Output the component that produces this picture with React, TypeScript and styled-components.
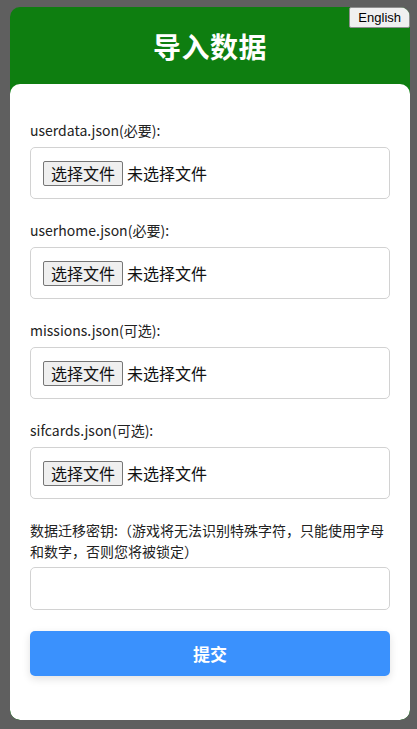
import React, { useState } from 'react';
import styled, { createGlobalStyle } from 'styled-components';

const GlobalStyle = createGlobalStyle`
  html, body {
    margin: 0;
    padding: 0;
    background: #5f5f5f;
  }
  body {
    font-family: "Noto Sans", "Noto Sans CJK SC", sans-serif;
    color: #222;
  }
`;

const PAGE = styled.div`
  padding: 7px 7px 9px 10px;
`;

const CARD = styled.div`
  position: relative;
  width: 400px;
  height: 713px;
  border-radius: 10px;
  overflow: hidden;
  background: #0e7e10;
  display: flex;
  flex-direction: column;
`;

const LANG_BTN = styled.button`
  position: absolute;
  top: 0;
  right: 0;
  height: 21px;
  padding: 0 8px;
  font-family: "Liberation Sans", Arial, sans-serif;
  font-size: 13px;
  color: #000;
  background: #f0f0f0;
  border: 1px solid #8f8f8f;
  border-radius: 2px;
`;

const HEADER = styled.div`
  height: 77px;
  display: flex;
  align-items: center;
  justify-content: center;
  color: #fff;
  font-family: "Noto Sans CJK SC", sans-serif;
  font-size: 28px;
  font-weight: 700;
  letter-spacing: 0.5px;
`;

const BODY = styled.form`
  flex: 1;
  background: #fff;
  border-radius: 10px;
  padding: 36px 20px 0;
  display: flex;
  flex-direction: column;
`;

const GROUP = styled.div`
  display: flex;
  flex-direction: column;
  margin-bottom: 21px;
`;

const LABEL = styled.label<{ gap?: number }>`
  font-family: "Noto Sans CJK SC", sans-serif;
  font-size: 14px;
  line-height: 21px;
  color: #222;
  margin-bottom: ${(p) => p.gap ?? 6}px;
`;

const FILE_BOX = styled.div`
  height: 52px;
  box-sizing: border-box;
  border: 1px solid #d2d2d2;
  border-radius: 5px;
  padding: 0 12px;
  display: flex;
  align-items: center;
  gap: 4px;
  font-family: "Noto Sans CJK SC", sans-serif;
  font-size: 16px;
  color: #111;
`;

const PICK = styled.label`
  height: 25px;
  box-sizing: border-box;
  padding: 0 7px;
  display: inline-flex;
  align-items: center;
  background: #efefef;
  border: 1px solid #767676;
  border-radius: 2px;
  cursor: pointer;
`;

const HIDDEN = styled.input`
  display: none;
`;

const TEXT_INPUT = styled.input`
  height: 43px;
  box-sizing: border-box;
  border: 1px solid #d2d2d2;
  border-radius: 5px;
  padding: 0 10px;
  font-size: 16px;
  outline: none;
`;

const SUBMIT = styled.button`
  height: 45px;
  border: none;
  border-radius: 5px;
  background: #3a91fd;
  color: #fff;
  font-family: "Noto Sans CJK SC", sans-serif;
  font-size: 17px;
  font-weight: 700;
  box-shadow: 0 3px 8px rgba(0, 0, 0, 0.12);
  cursor: pointer;
`;

const FILES = [
  { id: 'userdata', label: 'userdata.json(必要):' },
  { id: 'userhome', label: 'userhome.json(必要):' },
  { id: 'missions', label: 'missions.json(可选):' },
  { id: 'sifcards', label: 'sifcards.json(可选):' },
];

const FileField: React.FC<{ id: string; label: string }> = ({ id, label }) => {
  const [name, setName] = useState<string>('');
  return (
    <GROUP>
      <LABEL>{label}</LABEL>
      <FILE_BOX>
        <PICK htmlFor={id}>选择文件</PICK>
        <HIDDEN
          id={id}
          type="file"
          onChange={(e: React.ChangeEvent<HTMLInputElement>) => setName(e.target.files?.[0]?.name ?? '')}
        />
        <span>{name || '未选择文件'}</span>
      </FILE_BOX>
    </GROUP>
  );
};

const App: React.FC = () => {
  const [key, setKey] = useState<string>('');

  return (
    <PAGE>
      <GlobalStyle />
      <CARD>
        <LANG_BTN type="button">English</LANG_BTN>
        <HEADER>导入数据</HEADER>
        <BODY onSubmit={(e) => e.preventDefault()}>
          {FILES.map((f) => <FileField key={f.id} id={f.id} label={f.label} />)}
          <GROUP>
            <LABEL gap={5}>数据迁移密钥:（游戏将无法识别特殊字符，只能使用字母和数字，否则您将被锁定）</LABEL>
            <TEXT_INPUT value={key} onChange={(e) => setKey(e.target.value)} />
          </GROUP>
          <SUBMIT type="submit">提交</SUBMIT>
        </BODY>
      </CARD>
    </PAGE>
  );
};

export default App;
